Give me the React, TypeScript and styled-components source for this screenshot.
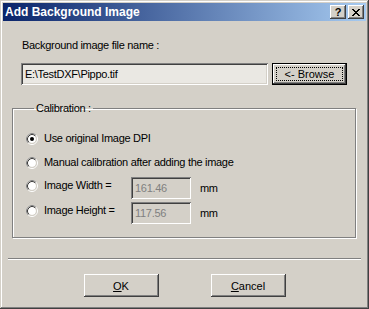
import React from "react";
import styled, { createGlobalStyle } from "styled-components";

const GlobalStyle = createGlobalStyle`
  html, body {
    margin: 0;
    padding: 0;
    background: #d4d0c8;
  }
  body {
    font-family: "Liberation Sans", Arial, sans-serif;
    font-size: 11px;
    color: #000;
  }
`;

const Window = styled.div`
  width: 369px;
  height: 309px;
  box-sizing: border-box;
  padding: 3px;
  display: flex;
  flex-direction: column;
  background: #d4d0c8;
  box-shadow: inset -1px -1px #404040, inset 1px 1px #d4d0c8, inset -2px -2px #808080, inset 2px 2px #fff;
`;

const TitleBar = styled.div`
  height: 18px;
  display: flex;
  align-items: center;
  padding: 0 2px;
  background: linear-gradient(to right, #0a246a, #a6caf0);
  color: #fff;
  font-weight: bold;
  font-size: 12px;
`;

const CaptionButtons = styled.div`
  margin-left: auto;
  display: flex;
  gap: 2px;
`;

const CaptionButton = styled.div`
  width: 16px;
  height: 14px;
  box-sizing: border-box;
  display: flex;
  align-items: center;
  justify-content: center;
  background: #d4d0c8;
  color: #000;
  font-size: 11px;
  font-weight: bold;
  line-height: 14px;
  box-shadow: inset -1px -1px #404040, inset 1px 1px #fff, inset -2px -2px #808080, inset 2px 2px #d4d0c8;
`;

const Body = styled.div`
  flex: 1;
  display: flex;
  flex-direction: column;
  letter-spacing: -0.3px;
`;

const FileLabel = styled.div`
  margin: 18px 0 0 19px;
  line-height: 13px;
`;

const FileRow = styled.div`
  display: flex;
  gap: 4px;
  margin: 11px 0 0 18px;
`;

const TextField = styled.div<{ $width: number; $disabled?: boolean }>`
  width: ${(p) => p.$width}px;
  height: 22px;
  box-sizing: border-box;
  padding: 0 4px;
  display: flex;
  align-items: center;
  background: ${(p) => (p.$disabled ? "#d4d0c8" : "#eae8e3")};
  color: ${(p) => (p.$disabled ? "#808080" : "#000")};
  box-shadow: inset 1px 1px #808080, inset -1px -1px #fff, inset 2px 2px #404040, inset -2px -2px #d4d0c8;
`;

const Button = styled.div<{ $default?: boolean; $width: number; $height: number }>`
  position: relative;
  width: ${(p) => p.$width}px;
  height: ${(p) => p.$height}px;
  box-sizing: border-box;
  display: flex;
  align-items: center;
  justify-content: center;
  background: #d4d0c8;
  letter-spacing: 0;
  box-shadow: ${(p) =>
    p.$default
      ? "inset 0 0 0 1px #000, inset -2px -2px #404040, inset 2px 2px #fff, inset -3px -3px #808080"
      : "inset -1px -1px #404040, inset 1px 1px #fff, inset -2px -2px #808080, inset 2px 2px #d4d0c8"};

  u {
    text-decoration: underline;
    text-underline-offset: 1px;
  }
`;

const FocusRect = styled.span`
  position: absolute;
  inset: 4px;
  border: 1px dotted #000;
`;

const Group = styled.fieldset`
  margin: 17px 10px 0 9px;
  padding: 17px 0 13px 13px;
  border: 1px solid #808080;
  box-shadow: inset 1px 1px #fff, 1px 1px #fff;
  display: flex;
  flex-direction: column;
  min-width: 0;
`;

const Legend = styled.legend`
  margin-left: 8px;
  padding: 0 2px;
  line-height: 13px;
`;

const OptionRow = styled.div<{ $top: number }>`
  display: flex;
  align-items: flex-start;
  margin-top: ${(p) => p.$top}px;
`;

const Option = styled.label<{ $width?: number }>`
  display: flex;
  align-items: center;
  gap: 6px;
  height: 13px;
  line-height: 13px;
  width: ${(p) => (p.$width ? `${p.$width}px` : "auto")};
  white-space: nowrap;
`;

const OptionWithField = styled(Option)`
  margin-top: 2px;
`;

const Unit = styled.span`
  margin: 5px 0 0 9px;
  line-height: 13px;
`;

const Separator = styled.div`
  margin: 20px 5px 0 5px;
  border-top: 1px solid #808080;
  border-bottom: 1px solid #fff;
`;

const ButtonRow = styled.div`
  display: flex;
  justify-content: center;
  gap: 52px;
  margin-top: 14px;
`;

const Radio = ({ checked }: { checked?: boolean }) => (
  <svg width="12" height="12" viewBox="0 0 12 12">
    <circle cx="6" cy="6" r="5.5" fill="none" stroke="#fff" />
    <path d="M2.11 9.89 A5.5 5.5 0 0 1 9.89 2.11" fill="none" stroke="#808080" />
    <circle cx="6" cy="6" r="4" fill="#fff" />
    <circle cx="6" cy="6" r="4.5" fill="none" stroke="#d4d0c8" />
    <path d="M2.82 9.18 A4.5 4.5 0 0 1 9.18 2.82" fill="none" stroke="#404040" />
    {checked && <circle cx="6" cy="6" r="2" fill="#000" />}
  </svg>
);

const CloseGlyph = () => (
  <svg width="8" height="7" viewBox="0 0 8 7">
    <path d="M0 0 L7 7 M1 0 L8 7 M7 0 L0 7 M8 0 L1 7" stroke="#000" strokeWidth="1" shapeRendering="crispEdges" />
  </svg>
);

export default function App() {
  return (
    <>
      <GlobalStyle />
      <Window>
        <TitleBar>
          <span>Add Background Image</span>
          <CaptionButtons>
            <CaptionButton>?</CaptionButton>
            <CaptionButton>
              <CloseGlyph />
            </CaptionButton>
          </CaptionButtons>
        </TitleBar>
        <Body>
          <FileLabel>Background image file name :</FileLabel>
          <FileRow>
            <TextField $width={247}>E:\TestDXF\Pippo.tif</TextField>
            <Button $default $width={75} $height={22}>
              <FocusRect />
              &lt;- Browse
            </Button>
          </FileRow>
          <Group>
            <Legend>Calibration :</Legend>
            <OptionRow $top={0}>
              <Option>
                <Radio checked />
                Use original Image DPI
              </Option>
            </OptionRow>
            <OptionRow $top={11}>
              <Option>
                <Radio />
                Manual calibration after adding the image
              </Option>
            </OptionRow>
            <OptionRow $top={8}>
              <OptionWithField $width={105}>
                <Radio />
                Image Width =
              </OptionWithField>
              <TextField $width={60} $disabled>
                161.46
              </TextField>
              <Unit>mm</Unit>
            </OptionRow>
            <OptionRow $top={3}>
              <OptionWithField $width={105}>
                <Radio />
                Image Height =
              </OptionWithField>
              <TextField $width={60} $disabled>
                117.56
              </TextField>
              <Unit>mm</Unit>
            </OptionRow>
          </Group>
          <Separator />
          <ButtonRow>
            <Button $width={75} $height={23}>
              <span>
                <u>O</u>K
              </span>
            </Button>
            <Button $width={75} $height={23}>
              <span>
                <u>C</u>ancel
              </span>
            </Button>
          </ButtonRow>
        </Body>
      </Window>
    </>
  );
}
